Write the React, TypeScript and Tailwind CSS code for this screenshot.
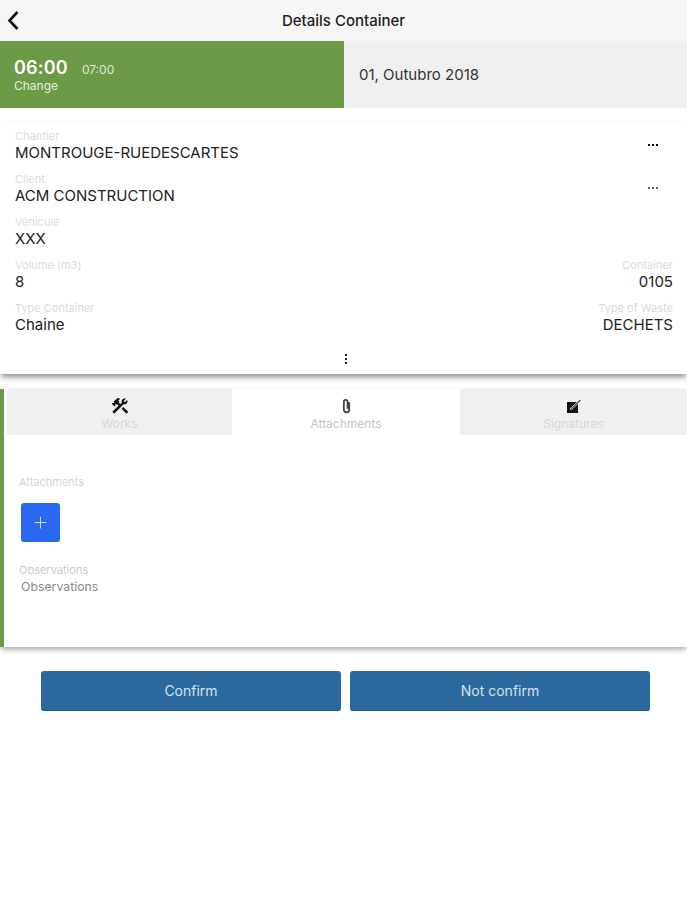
import React from 'react';
import { MdConstruction } from 'react-icons/md';
import { Plus } from 'lucide-react';

function Field({ label, value, right }: { label: string; value: string; right?: boolean }) {
  return (
    <div className={right ? 'text-right' : ''}>
      <div className="h-[13px] text-[11px] leading-[13px] text-[#dadada]">{label}</div>
      <div className="-mt-[1px] h-[21px] text-[15px] leading-[21px] text-[#222222]">{value}</div>
    </div>
  );
}

function Dots({ faded }: { faded?: boolean }) {
  return (
    <div className={`flex gap-[2px] ${faded ? 'opacity-60' : ''}`}>
      <span className="h-[2px] w-[2px] bg-black" />
      <span className="h-[2px] w-[2px] bg-black" />
      <span className="h-[2px] w-[2px] bg-black" />
    </div>
  );
}

function Tab({ label, icon, active, className }: { label: string; icon: React.ReactNode; active?: boolean; className: string }) {
  return (
    <div className={`flex h-[46px] flex-col items-center pt-[8px] ${className} ${active ? 'bg-white' : 'bg-[#f0f0f0]'}`}>
      <div className="flex h-[18px] items-center justify-center">{icon}</div>
      <div className={`mt-[1px] text-[12px] leading-[15px] ${active ? 'text-[#c4c4c4]' : 'text-[#d8d8d8]'}`}>{label}</div>
    </div>
  );
}

export default function App() {
  return (
    <div className="h-[900px] w-[687px] overflow-hidden bg-white font-['Inter',sans-serif]">
      <header className="relative flex h-[41px] items-center justify-center bg-[#f6f6f6]">
        <svg className="absolute left-[6px] top-[10px]" width="14" height="21" viewBox="0 0 14 21" fill="none">
          <path d="M11.5 2 L3.5 10.5 L11.5 19" stroke="#111" strokeWidth="2.6" />
        </svg>
        <span className="text-[15px] font-medium leading-[20px] text-[#222222]">Details Container</span>
      </header>

      <div className="flex h-[67px]">
        <div className="flex w-[344px] flex-col justify-center bg-[#6d9a46] pl-[14px] text-white">
          <div className="flex items-baseline gap-[14px]">
            <span className="text-[18px] font-semibold leading-[22px] tracking-[0.2px]">06:00</span>
            <span className="text-[12px] leading-[22px] text-[#dfe9d4]">07:00</span>
          </div>
          <div className="-mt-[3px] text-[12px] leading-[15px] text-[#e6eede]">Change</div>
        </div>
        <div className="flex flex-1 items-center bg-[#f0f0f0] pl-[15px] pt-[2px] text-[15px] text-[#333333]">01, Outubro 2018</div>
      </div>

      <section className="relative mt-[14px] h-[252px] bg-white pl-[15px] pr-[14px] pt-[8px] shadow-[0_4px_6px_-1px_rgba(0,0,0,0.45)]">
        <div className="flex flex-col gap-[10px]">
          <div className="flex items-start justify-between">
            <Field label="Chantier" value="MONTROUGE-RUEDESCARTES" />
            <div className="mr-[15px] mt-[14px]"><Dots /></div>
          </div>
          <div className="flex items-start justify-between">
            <Field label="Client" value="ACM CONSTRUCTION" />
            <div className="mr-[15px] mt-[14px]"><Dots faded /></div>
          </div>
          <Field label="Véhicule" value="XXX" />
          <div className="flex justify-between">
            <Field label="Volume (m3)" value="8" />
            <Field label="Container" value="0105" right />
          </div>
          <div className="flex justify-between">
            <Field label="Type Container" value="Chaine" />
            <Field label="Type of Waste" value="DECHETS" right />
          </div>
        </div>
        <div className="absolute bottom-[10px] left-[345px] flex flex-col gap-[2px]">
          <span className="h-[2px] w-[2px] bg-[#222222]" />
          <span className="h-[2px] w-[2px] bg-[#222222]" />
          <span className="h-[2px] w-[2px] bg-[#222222]" />
        </div>
      </section>

      <section className="mt-[15px] h-[258px] border-l-[4px] border-[#6d9a46] bg-white shadow-[0_3px_6px_-1px_rgba(0,0,0,0.4)]">
        <div className="flex pl-[3px]">
          <Tab className="w-[225px]" label="Works" icon={<MdConstruction className="h-[20px] w-[20px] text-[#111111]" />} />
          <Tab
            className="w-[228px]"
            label="Attachments"
            active
            icon={
              <svg width="11" height="16" viewBox="0 0 10 15" fill="none">
                <path d="M7.5 4 V11 A2.5 2.5 0 0 1 2.5 11 V3.5 A1.7 1.7 0 0 1 6 3.5 V10" stroke="#444" strokeWidth="1.7" />
              </svg>
            }
          />
          <Tab
            className="flex-1"
            label="Signatures"
            icon={
              <svg width="16" height="15" viewBox="0 0 16 15">
                <rect x="1" y="3" width="11" height="11" fill="#111" />
                <path d="M4.5 10.5 L14.5 1" stroke="#fff" strokeWidth="2.4" />
                <path d="M5 10 L14.5 1" stroke="#444" strokeWidth="1.2" />
              </svg>
            }
          />
        </div>
        <div className="pl-[15px] pt-[40px]">
          <div className="text-[11px] leading-[14px] text-[#d4d4d4]">Attachments</div>
          <button className="ml-[2px] mt-[14px] flex h-[39px] w-[39px] items-center justify-center rounded-[3px] bg-[#2b68f0] text-[#c5d6fb]">
            <Plus className="h-[19px] w-[19px]" strokeWidth={1.3} />
          </button>
          <div className="mt-[21px] text-[11px] leading-[14px] text-[#cccccc]">Observations</div>
          <div className="ml-[2px] mt-[2px] text-[12.3px] leading-[16px] text-[#8a8a8a]">Observations</div>
        </div>
      </section>

      <div className="mt-[24px] flex gap-[9px] pl-[41px]">
        <button className="h-[40px] w-[300px] rounded-[3px] border-b border-[#1f5a8e] bg-[#2a689d] text-[14px] text-[#d5e4f0]">Confirm</button>
        <button className="h-[40px] w-[300px] rounded-[3px] border-b border-[#1f5a8e] bg-[#2a689d] text-[14px] text-[#d5e4f0]">Not confirm</button>
      </div>
    </div>
  );
}
